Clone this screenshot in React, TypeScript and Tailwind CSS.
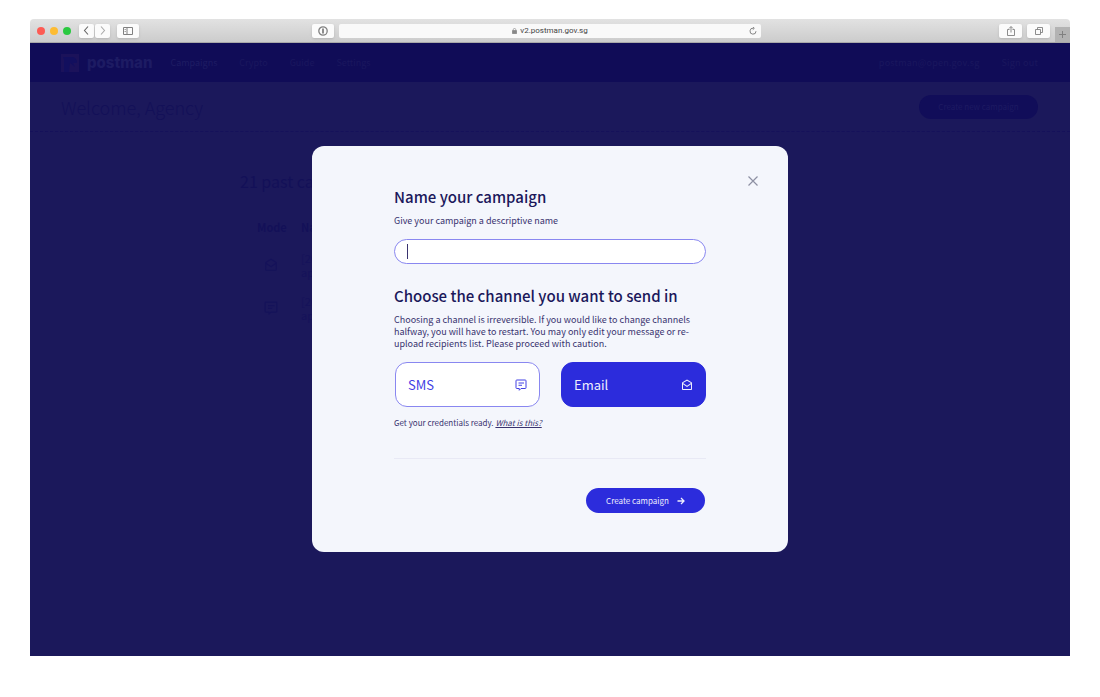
import type { ReactNode, SVGProps } from 'react';

const sans = "font-['Noto_Sans_CJK_SC','Noto_Sans',sans-serif]";

function MailIcon(props: SVGProps<SVGSVGElement>) {
  return (
    <svg viewBox="0 0 24 24" fill="currentColor" aria-hidden="true" {...props}>
      <path d="M21.99 8c0-.72-.37-1.35-.94-1.7L12 1 2.95 6.3C2.38 6.65 2 7.28 2 8v12c0 1.1.9 2 2 2h16c1.1 0 2-.9 2-2l-.01-12zM20 8v.01L12 13.5 4 8l8-4.68L20 8zM4 20v-9.4l8 5.3 8-5.3V20H4z" />
    </svg>
  );
}

function MessageIcon(props: SVGProps<SVGSVGElement>) {
  return (
    <svg viewBox="0 0 24 24" fill="none" stroke="currentColor" strokeWidth="2" strokeLinejoin="round" aria-hidden="true" {...props}>
      <path d="M3.5 2h17A1.5 1.5 0 0 1 22 3.500v14a1.500 1.500 0 0 1-1.500 1.500H12l-3.500 3.500V19h-5A1.500 1.500 0 0 1 2 17.500v-14A1.500 1.500 0 0 1 3.500 2z" />
      <path d="M7 8h11M7 12.500h7" />
    </svg>
  );
}

function ToolButton({ label, className, children }: { label: string; className: string; children: ReactNode }) {
  return (
    <button type="button" aria-label={label} className={`flex h-[14px] items-center justify-center rounded-[2px] bg-[#fbfbfb] text-[#808080] shadow-sm ${className}`}>
      {children}
    </button>
  );
}

function BrowserBar() {
  return (
    <div className="grid h-6 shrink-0 grid-cols-[1fr_422px_1fr] items-center rounded-t border-b border-[#a9a9a9] bg-linear-to-b from-[#e2e2e2] to-[#cccccc]">
      <div className="flex items-center pl-[7px]">
        <div className="flex gap-[5px]">
          <span className="size-2 rounded-full bg-[#fd5b54]" />
          <span className="size-2 rounded-full bg-[#fdbc33]" />
          <span className="size-2 rounded-full bg-[#2ac940]" />
        </div>
        <div className="ml-2 flex gap-px">
          <ToolButton label="Back" className="w-[15px]">
            <svg className="size-[9px]" viewBox="0 0 9 9" fill="none" stroke="#666" strokeWidth="1.1"><path d="M6 .5 2.5 4.5 6 8.500" /></svg>
          </ToolButton>
          <ToolButton label="Forward" className="w-[15px]">
            <svg className="size-[9px]" viewBox="0 0 9 9" fill="none" stroke="#aaa" strokeWidth="1.1"><path d="M3 .5l3.500 4L3 8.500" /></svg>
          </ToolButton>
        </div>
        <ToolButton label="Sidebar" className="ml-[7px] w-[22px]">
          <svg className="h-2 w-[10px]" viewBox="0 0 10 8" fill="none" stroke="currentColor"><path d="M.5.5h9v7h-9zM4 .5v7" /><path d="M1.500 2.500h1.500M1.500 4.500h1.500" strokeWidth=".7" /></svg>
        </ToolButton>
        <ToolButton label="Passwords" className="mr-[5px] ml-auto w-[22px]">
          <svg className="size-[10px]" viewBox="0 0 10 10" fill="none" stroke="currentColor"><circle cx="5" cy="5" r="4.200" strokeWidth="1.300" /><path d="M5 2.500v5" strokeWidth="1.800" /></svg>
        </ToolButton>
      </div>
      <div className="flex h-[14px] items-center rounded-[2px] bg-[#f9f9f9] pr-1 pl-3 font-['Roboto',sans-serif] text-[8px] leading-none text-[#444]">
        <div className="flex flex-1 items-center justify-center gap-[3px]">
          <svg className="h-[6px] w-[5px]" viewBox="0 0 6 7" fill="none" stroke="#888"><path d="M.5 3h5v3.500h-5z" fill="#888" /><path d="M1.500 3V1.800a1.500 1.300 0 0 1 3 0V3" strokeWidth=".8" /></svg>
          v2.postman.gov.sg
        </div>
        <button type="button" aria-label="Reload">
          <svg className="size-2" viewBox="0 0 8 8" fill="none" stroke="#777" strokeWidth=".9"><path d="M4.500 1.200A3 3 0 1 0 7 4.200M3.800 0l1.500 1.300-1.500 1.400" /></svg>
        </button>
      </div>
      <div className="flex h-full items-center justify-end">
        <ToolButton label="Share" className="w-[23px]">
          <svg className="size-[10px]" viewBox="0 0 10 10" fill="none" stroke="currentColor"><path d="M3.500 3.500h-2v6h7v-6h-2M5 6.500V.8M3 2.500l2-2 2 2" strokeWidth=".9" /></svg>
        </ToolButton>
        <ToolButton label="Tabs" className="mx-[5px] w-[23px]">
          <svg className="size-2" viewBox="0 0 8 8" fill="none" stroke="currentColor" strokeWidth=".9"><path d="M.5 2.500h5v5h-5zM2.500 2.500v-2h5v5h-2" /></svg>
        </ToolButton>
        <button type="button" aria-label="New tab" className="flex h-[15px] w-[15px] items-center justify-center self-end bg-[#b3b3b3]">
          <svg className="size-[7px]" viewBox="0 0 7 7" stroke="#808080"><path d="M3.500 0v7M0 3.500h7" /></svg>
        </button>
      </div>
    </div>
  );
}

function Dashboard() {
  const rows = [MailIcon, MessageIcon];
  return (
    <div className="flex flex-1 flex-col text-[#131058]">
      <nav className="flex h-[39px] items-center bg-[#100c57] pr-8 pl-[31px] text-[9px] leading-3 text-[#1a175e]">
        <svg className="size-[18px]" viewBox="0 0 18 18" aria-hidden="true">
          <path d="M0 0h18v18H0z" fill="#1b125a" />
          <path d="M2 3h9a5 5 0 0 1 5 5v1h-4l2 4-5-4-1 9H3V6z" fill="#120f5e" />
        </svg>
        <span className="ml-2 font-['Inter',sans-serif] text-[15px] leading-5 font-extrabold text-[#1d1b63]">postman</span>
        <div className="ml-[18px] flex gap-[22px]">
          <a href="#campaigns" className="text-[#1e1c63]">Campaigns</a>
          <a href="#crypto">Crypto</a>
          <a href="#guide">Guide</a>
          <a href="#settings">Settings</a>
        </div>
        <div className="ml-auto flex gap-[22px] tracking-wide">
          <span>postman@open.gov.sg</span>
          <a href="#sign-out">Sign out</a>
        </div>
      </nav>
      <header className="flex h-[50px] items-center justify-between border-b border-dashed border-[#15115a] pr-8 pl-[31px]">
        <h1 className="text-[18px] leading-6 font-light">Welcome, Agency</h1>
        <button type="button" className="h-6 w-[119px] rounded-full bg-[#110d59] text-[8px] text-[#1d1a62]">Create new campaign</button>
      </header>
      <main className="mx-auto w-[620px] pt-[35px]">
        <h2 className="text-[16px] leading-7 font-normal">21 past campaigns</h2>
        <table className="mt-4 w-full text-left text-[11px] leading-[14px]">
          <thead>
            <tr className="h-8">
              <th className="w-[61px] pl-[17px] font-bold">Mode</th>
              <th className="font-bold">Name</th>
            </tr>
          </thead>
          <tbody className="text-[#15125a]">
            {rows.map((Icon, i) => (
              <tr key={i} className="h-[43px]">
                <td className="pl-6"><Icon className="size-[14px]" /></td>
                <td>[2020]<br />app</td>
              </tr>
            ))}
          </tbody>
        </table>
      </main>
    </div>
  );
}

function CampaignDialog() {
  return (
    <form role="dialog" aria-labelledby="name-title" className="grid w-[476px] grid-cols-[82px_312px_82px] rounded-xl bg-[#f4f6fc] pt-[41px] pb-[39px] text-[#39336f]">
      <div className="col-start-2">
        <label htmlFor="campaign" id="name-title" className="block text-[15px] leading-5 font-medium text-[#1b185b]">Name your campaign</label>
        <p className="mt-2 text-[9px] leading-3">Give your campaign a descriptive name</p>
        <div className="mt-3 flex h-[25px] items-center rounded-full border border-[#8987f0] bg-white px-3">
          <span className="h-[15px] w-px bg-[#39336f]" />
          <input id="campaign" type="text" className="min-w-0 flex-1 bg-transparent text-[9px] outline-none" />
        </div>
        <h2 className="mt-[22px] text-[15px] leading-5 font-medium text-[#1b185b]">Choose the channel you want to send in</h2>
        <p className="mt-2 text-[9px] leading-3">
          Choosing a channel is irreversible. If you would like to change channels halfway, you will have to restart. You may only edit your message or re-upload recipients list. Please proceed with caution.
        </p>
        <div className="mt-3 grid grid-cols-2 gap-[21px] pl-px">
          <button type="button" className="flex h-[45px] items-center justify-between rounded-xl border border-[#8987f0] bg-white px-3 text-[13px] text-[#4240e4]">
            SMS <MessageIcon className="size-3" />
          </button>
          <button type="button" className="flex h-[45px] items-center justify-between rounded-xl border border-[#2c2cdc] bg-[#2c2cdc] px-3 text-[13px] text-[#eeeefd]">
            Email <MailIcon className="size-3" />
          </button>
        </div>
        <p className="mt-[10px] text-[8px] leading-3">
          Get your credentials ready. <a href="#credentials" className="italic underline">What is this?</a>
        </p>
        <hr className="mt-[29px] border-[#e8e9f5]" />
        <div className="mt-[29px] flex justify-end pr-px">
          <button type="submit" className="flex h-[25px] w-[119px] items-center justify-center gap-2 rounded-full bg-[#2c2cdc] text-[8px] text-[#eeeefd]">
            Create campaign
            <svg className="size-2" viewBox="0 0 8 8" fill="none" stroke="currentColor" strokeWidth="1.300"><path d="M.5 4h6.500M4 1l3 3-3 3" /></svg>
          </button>
        </div>
      </div>
      <button type="button" aria-label="Close" className="col-start-3 row-start-1 mt-[-11px] ml-[42px] flex size-[10px] text-[#8d90a3]">
        <svg className="size-[10px]" viewBox="0 0 10 10" stroke="currentColor" strokeWidth="1.200"><path d="M.5.5l9 9M9.500.5l-9 9" /></svg>
      </button>
    </form>
  );
}

export default function App() {
  return (
    <div className={`flex min-h-screen flex-col bg-white px-[30px] pt-[19px] pb-[41px] ${sans}`}>
      <BrowserBar />
      <div className="relative flex flex-1 flex-col bg-[#1b185b]">
        <Dashboard />
        <div className="absolute inset-0 flex items-center justify-center pb-px">
          <CampaignDialog />
        </div>
      </div>
    </div>
  );
}
